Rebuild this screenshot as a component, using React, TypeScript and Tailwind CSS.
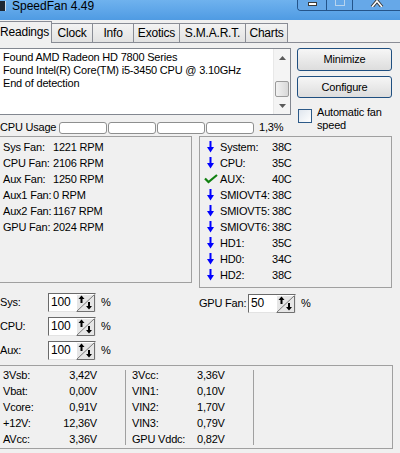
import React from 'react';

function DownArrow() {
  return (
    <svg width="7" height="12" viewBox="0 0 7 12" className="shrink-0">
      <rect x="2.5" y="0" width="2" height="7" fill="#0000ff" />
      <path d="M0 6 H7 L3.5 11.5 Z" fill="#0000ff" />
    </svg>
  );
}

function Check() {
  return (
    <svg width="14" height="10" viewBox="0 0 14 10" className="shrink-0">
      <path d="M1 4.5 L4.5 8 L13 1" stroke="#108010" strokeWidth="2.2" fill="none" />
    </svg>
  );
}

function Spin() {
  return (
    <svg width="19" height="18" viewBox="0 0 19 18" className="shrink-0">
      <rect x="0" y="0" width="19" height="18" fill="#e6e6e6" />
      <path d="M0.5 17.5 V0.5 H18.5" stroke="#ffffff" fill="none" />
      <path d="M0.5 17.5 H18.5 V0.5" stroke="#707070" fill="none" />
      <path d="M1 17 L18 1" stroke="#7a7a7a" />
      <rect x="4.5" y="3" width="2" height="6" fill="#000" />
      <path d="M2.5 5 H8.5 L5.5 1.5 Z" fill="#000" />
      <rect x="12" y="8" width="2" height="6" fill="#000" />
      <path d="M10 12 H16 L13 15.5 Z" fill="#000" />
    </svg>
  );
}

function SpinField({ value }: { value: string }) {
  return (
    <div className="flex w-[48px] h-[19px] border border-t-[#6a6a6a] border-l-[#6a6a6a] border-r-[#e3e3e3] border-b-[#e3e3e3] bg-white">
      <span className="flex-1 pl-[2px] text-[12px] leading-[17px]">{value}</span>
      <Spin />
    </div>
  );
}

const fans = [
  ['Sys Fan:', '1221 RPM'],
  ['CPU Fan:', '2106 RPM'],
  ['Aux Fan:', '1250 RPM'],
  ['Aux1 Fan:', '0 RPM'],
  ['Aux2 Fan:', '1167 RPM'],
  ['GPU Fan:', '2024 RPM'],
];

const temps = [
  ['System:', '38C', 'down'],
  ['CPU:', '35C', 'down'],
  ['AUX:', '40C', 'ok'],
  ['SMIOVT4:', '38C', 'down'],
  ['SMIOVT5:', '38C', 'down'],
  ['SMIOVT6:', '38C', 'down'],
  ['HD1:', '35C', 'down'],
  ['HD0:', '34C', 'down'],
  ['HD2:', '38C', 'down'],
];

const volts1 = [
  ['3Vsb:', '3,42V'],
  ['Vbat:', '0,00V'],
  ['Vcore:', '0,91V'],
  ['+12V:', '12,36V'],
  ['AVcc:', '3,36V'],
];

const volts2 = [
  ['3Vcc:', '3,36V'],
  ['VIN1:', '0,10V'],
  ['VIN2:', '1,70V'],
  ['VIN3:', '0,79V'],
  ['GPU Vddc:', '0,82V'],
];

const tabs = [
  ['Clock', 'w-[41px]'],
  ['Info', 'w-[41px]'],
  ['Exotics', 'w-[46px]'],
  ['S.M.A.R.T.', 'w-[66px]'],
  ['Charts', 'w-[42px]'],
];

export default function App() {
  return (
    <div className="w-[400px] h-[453px] overflow-hidden bg-[#f0f0f0] text-black text-[11px] leading-[13px] tracking-[-0.2px] whitespace-nowrap font-['Liberation_Sans',Arial,sans-serif] flex flex-col">
      {/* title bar */}
      <div className="h-[20px] shrink-0 flex items-start bg-linear-to-b from-[#6fb2ee] to-[#4f9be3]">
        <div className="w-[6px] h-[10px] mt-[1px] bg-[#1d2733] border-r border-[#c8d8e8]" />
        <span className="ml-[6px] text-[12px] leading-[12px] tracking-normal">SpeedFan 4.49</span>
        <div className="ml-auto flex w-[103px] h-[11px] border border-t-0 border-r-0 border-[#24548a] rounded-bl-[4px] overflow-hidden">
          <div className="w-[29px] flex justify-center items-start bg-[#66a8e8] border-r border-[#24548a]">
            <div className="w-[9px] h-[4px] mt-[2px] bg-white border border-[#3a3a3a]" />
          </div>
          <div className="w-[26px] flex justify-center items-start bg-[#66a8e8] border-r border-[#24548a]">
            <div className="w-[10px] h-[6px] border border-t-0 border-[#b8d4ee]" />
          </div>
          <div className="flex-1 flex justify-center items-start bg-[#66a8e8]">
            <svg width="14" height="7" viewBox="0 0 14 7">
              <path d="M2 7 L7 1 L12 7" stroke="#3a3a3a" strokeWidth="3.5" fill="none" />
              <path d="M2 7 L7 1 L12 7" stroke="#ffffff" strokeWidth="1.6" fill="none" />
            </svg>
          </div>
        </div>
      </div>

      {/* tabs */}
      <div className="h-[23px] shrink-0 flex items-end border-b border-[#898c95]">
        <div className="h-[22px] w-[52px] -mb-px relative z-10 bg-[#f0f0f0] border border-l-0 border-b-0 border-[#898c95] flex items-center text-[12px]">
          Readings
        </div>
        {tabs.map(([t, w]) => (
          <div
            key={t}
            className={`${w} h-[19px] border border-b-0 border-l-0 border-[#898c95] bg-linear-to-b from-[#f3f3f3] to-[#e2e2e2] flex items-center justify-center text-[12px]`}
          >
            {t}
          </div>
        ))}
      </div>

      {/* top section */}
      <div className="h-[93px] shrink-0 pt-[5px] flex">
        <div className="w-[291px] flex flex-col">
          <div className="h-[67px] flex bg-white border border-l-0 border-[#828790]">
            <div className="flex-1 pl-[3px] pt-[2px] leading-[13px]">
              <div>Found AMD Radeon HD 7800 Series</div>
              <div>Found Intel(R) Core(TM) i5-3450 CPU @ 3.10GHz</div>
              <div>End of detection</div>
            </div>
            <div className="w-[17px] flex flex-col bg-[#f4f4f4] border-l border-[#e8e8e8]">
              <div className="h-[17px] flex items-center justify-center">
                <svg width="7" height="4" viewBox="0 0 7 4"><path d="M0 4 L3.5 0 L7 4 Z" fill="#5a5a5a" /></svg>
              </div>
              <div className="flex-1 flex flex-col justify-end">
                <div className="h-[16px] mx-[1px] rounded-[2px] border border-[#9a9a9a] bg-linear-to-r from-[#f2f2f2] to-[#d8d8d8]" />
              </div>
              <div className="h-[17px] flex items-center justify-center">
                <svg width="7" height="4" viewBox="0 0 7 4"><path d="M0 0 L3.5 4 L7 0 Z" fill="#5a5a5a" /></svg>
              </div>
            </div>
          </div>
          <div className="mt-[6px] h-[13px] flex items-center">
            <span className="w-[59px]">CPU Usage</span>
            <div className="flex gap-[1px]">
              {[0, 1, 2, 3].map((i) => (
                <div key={i} className="w-[48px] h-[12px] rounded-[3px] border border-[#8e8f8f] bg-white" />
              ))}
            </div>
            <span className="ml-[5px]">1,3%</span>
          </div>
        </div>
        <div className="ml-[6px] w-[95px] flex flex-col">
          <div className="h-[23px] rounded-[3px] border border-[#1f4f80] bg-linear-to-b from-[#f6f6f6] to-[#dddddd] flex items-center justify-center">
            Minimize
          </div>
          <div className="mt-[5px] h-[22px] rounded-[3px] border border-[#1f4f80] bg-linear-to-b from-[#f6f6f6] to-[#dddddd] flex items-center justify-center">
            Configure
          </div>
          <div className="mt-[8px] flex items-start">
            <div className="mt-[3px] ml-[1px] w-[14px] h-[14px] border border-[#2c5a88] bg-linear-to-br from-[#dfe6ee] to-[#ffffff]" />
            <div className="ml-[5px] leading-[13px]">
              <div>Automatic fan</div>
              <div>speed</div>
            </div>
          </div>
        </div>
      </div>

      {/* readings group boxes */}
      <div className="shrink-0 flex items-start">
        <div className="w-[192px] h-[147px] border border-l-0 border-[#a0a0a0] pt-[2px] pl-[3px]">
          {fans.map(([l, v]) => (
            <div key={l} className="h-[16px] flex items-center">
              <span className="w-[50px]">{l}</span>
              <span>{v}</span>
            </div>
          ))}
        </div>
        <div className="ml-[7px] w-[193px] h-[152px] border border-[#a0a0a0] pt-[2px]">
          {temps.map(([l, v, s]) => (
            <div key={l} className="h-[16px] flex items-center">
              <div className="w-[20px] flex items-center">
                {s === 'ok' ? (
                  <div className="ml-[4px]"><Check /></div>
                ) : (
                  <div className="ml-[7px]"><DownArrow /></div>
                )}
              </div>
              <span className="w-[52px]">{l}</span>
              <span>{v}</span>
            </div>
          ))}
        </div>
      </div>

      {/* fan speed controls */}
      <div className="shrink-0 mt-[5px] flex items-start">
        <div className="w-[199px] flex flex-col gap-[5px]">
          {['Sys:', 'CPU:', 'Aux:'].map((l) => (
            <div key={l} className="h-[19px] flex items-center">
              <span className="w-[48px]">{l}</span>
              <SpinField value="100" />
              <span className="ml-[5px]">%</span>
            </div>
          ))}
        </div>
        <div className="h-[20px] flex items-center">
          <span className="w-[49px]">GPU Fan:</span>
          <SpinField value="50" />
          <span className="ml-[5px]">%</span>
        </div>
      </div>

      {/* voltages */}
      <div className="shrink-0 mt-[5px] w-[393px] h-[84px] border border-l-0 border-[#a0a0a0] flex pt-[1px]">
        <div className="w-[125px] pl-[3px]">
          {volts1.map(([l, v]) => (
            <div key={l} className="w-[94px] h-[16px] flex items-center">
              <span className="flex-1">{l}</span>
              <span>{v}</span>
            </div>
          ))}
        </div>
        <div className="w-px my-[3px] bg-[#a0a0a0]" />
        <div className="w-[127px] pl-[6px]">
          {volts2.map(([l, v]) => (
            <div key={l} className="h-[16px] flex items-center">
              <span className="w-[65px]">{l}</span>
              <span>{v}</span>
            </div>
          ))}
        </div>
        <div className="w-px my-[3px] bg-[#a0a0a0]" />
      </div>
    </div>
  );
}
